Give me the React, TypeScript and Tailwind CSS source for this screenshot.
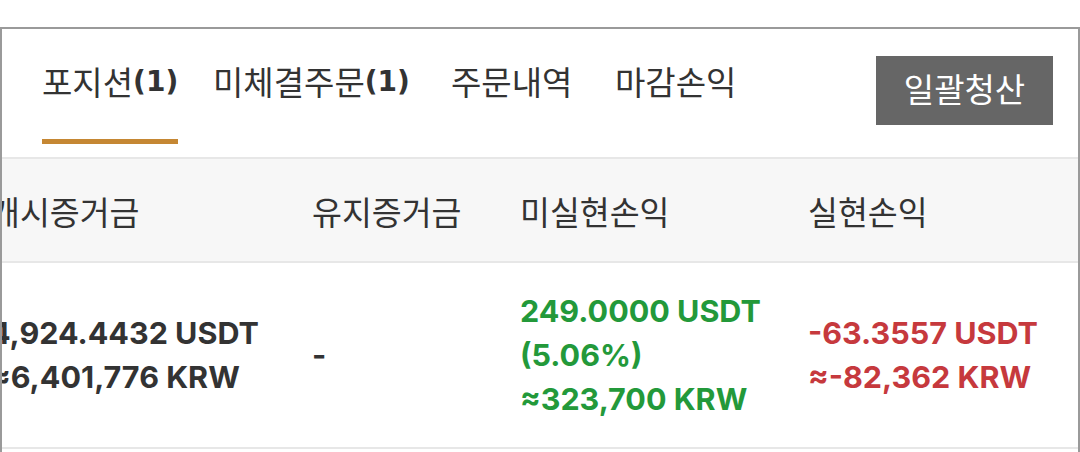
import React from "react";

const KR = "font-['Noto_Sans_CJK_KR',sans-serif]";
const NUM = "font-['Inter','Noto_Sans_CJK_KR',sans-serif]";

function Tab({ label, count, active }: { label: string; count?: number; active?: boolean }) {
  return (
    <div className="inline-flex flex-col items-stretch">
      <div className={`h-[36px] flex items-center text-[33px] leading-[36px] text-[#333] ${KR} whitespace-nowrap`}>
        <span>{label}</span>
        {count !== undefined && (
          <span className="font-['DejaVu_Sans',sans-serif] font-bold text-[28px] pt-[2px]">({count})</span>
        )}
      </div>
      <div className={`mt-[40px] h-[5px] ${active ? "bg-[#c58733]" : "bg-transparent"}`} />
    </div>
  );
}

export default function App() {
  return (
    <div className="w-[1080px] h-[452px] bg-white overflow-hidden pt-[27px]">
      <div className="h-[425px] border-t-2 border-l-2 border-r-2 border-[#9a9a9a] overflow-hidden">
        {/* tab bar */}
        <div className="h-[128px] flex items-start justify-between pl-[40px] pr-[25px]">
          <div className="flex pt-[34px]">
            <div className="w-[171px]">
              <Tab label="포지션" count={1} active />
            </div>
            <div className="w-[238px]">
              <Tab label="미체결주문" count={1} />
            </div>
            <div className="w-[164px]">
              <Tab label="주문내역" />
            </div>
            <div>
              <Tab label="마감손익" />
            </div>
          </div>
          <button className={`mt-[27px] w-[177px] h-[69px] bg-[#666666] text-white text-[33px] ${KR} flex items-center justify-center pb-[4px]`}>
            일괄청산
          </button>
        </div>

        {/* table */}
        <div className="overflow-hidden">
          <div className="-ml-[12px] w-[1100px]">
            <div className={`flex h-[106px] items-center bg-[#f7f7f7] border-t-2 border-b-2 border-[#e7e7e7] text-[32.5px] text-[#333] ${KR}`}>
              <div className="w-[322px] pt-[2px]">개시증거금</div>
              <div className="w-[208px] pt-[2px]">유지증거금</div>
              <div className="w-[288px] pt-[2px]">미실현손익</div>
              <div className="flex-1 pt-[2px]">실현손익</div>
            </div>
            <div className={`flex h-[186px] items-center border-b-2 border-[#e7e7e7] text-[30.5px] font-bold leading-[44px] ${NUM}`}>
              <div className="w-[322px] text-[#333]">
                <div>4,924.4432 USDT</div>
                <div>≈6,401,776 KRW</div>
              </div>
              <div className="w-[208px] text-[#333]">-</div>
              <div className="w-[288px] text-[#23993a]">
                <div>249.0000 USDT</div>
                <div>(5.06%)</div>
                <div>≈323,700 KRW</div>
              </div>
              <div className="flex-1 text-[#c6393d]">
                <div>-63.3557 USDT</div>
                <div>≈-82,362 KRW</div>
              </div>
            </div>
          </div>
        </div>
      </div>
    </div>
  );
}
